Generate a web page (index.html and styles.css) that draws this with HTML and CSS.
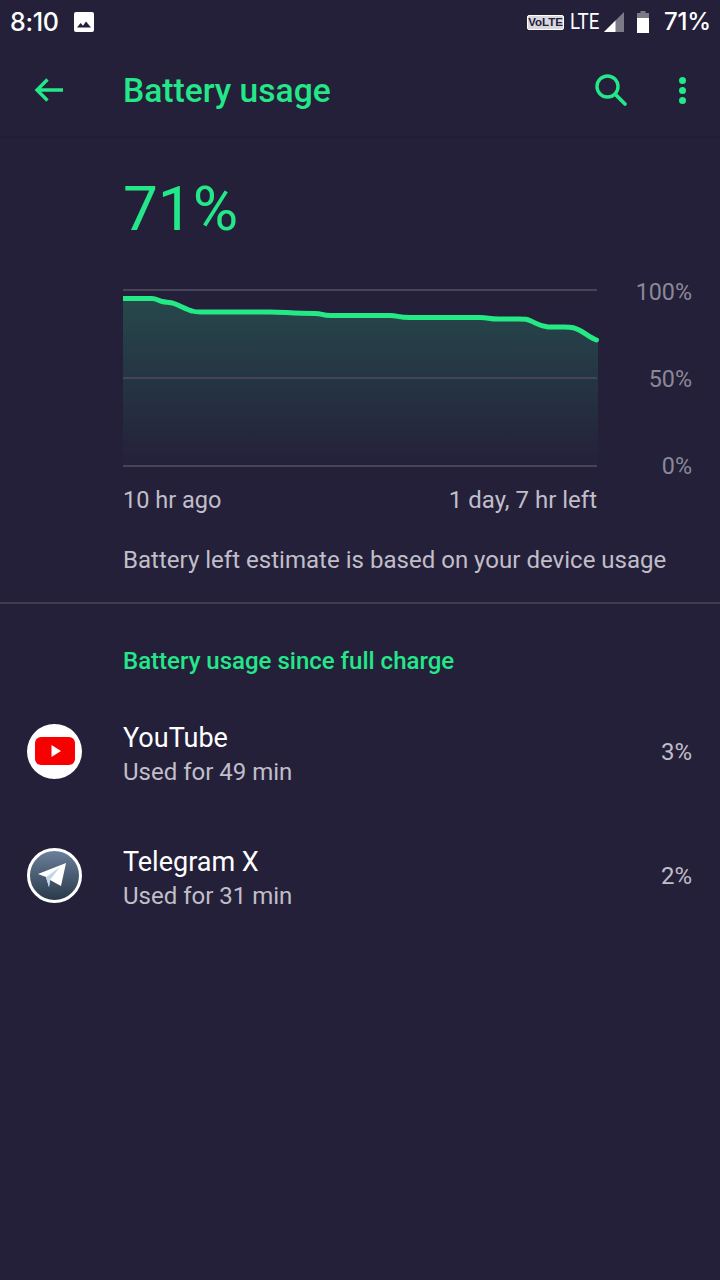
FILE: index.html
```html
<!DOCTYPE html>
<html lang="en">
<head>
<meta charset="utf-8">
<title>Battery usage</title>
<link rel="stylesheet" href="styles.css">
</head>
<body>
<div class="screen">
  <header class="status">
    <div class="status-left">
      <span class="time">8:10</span>
      <svg class="ic-photo" viewBox="0 0 20 20"><rect width="20" height="20" rx="2" fill="#fff"/><path d="M3 15.500l3.600-4.600 2.400 2.900 3-4.300 5 6z" fill="#24203a"/></svg>
    </div>
    <div class="status-right">
      <span class="volte">VoLTE</span>
      <span class="lte">LTE</span>
      <svg class="ic-signal" viewBox="0 0 20 20"><path d="M20 0v20H0z" fill="#7d7a88"/><path d="M11.500 8.500V20H0z" fill="#fff"/></svg>
      <svg class="ic-batt" viewBox="0 0 12 22"><path d="M3.500 0h5v2H12v5H0V2h3.500z" fill="#7d7a88"/><rect y="7" width="12" height="15" fill="#fff"/></svg>
      <span class="pct">71%</span>
    </div>
  </header>

  <nav class="toolbar">
    <div class="nav-icon">
      <svg width="32" height="32" viewBox="0 0 32 32"><path d="M31 16H5M15.500 5.500L5 16 15.500 26.500" fill="none" stroke="#23e788" stroke-width="3.400"/></svg>
    </div>
    <h1 class="title">Battery usage</h1>
    <svg class="ic-search" viewBox="0 0 34 34"><circle cx="13.500" cy="13.500" r="10.500" fill="none" stroke="#23e788" stroke-width="3.400"/><path d="M21.500 21.500L31 31" stroke="#23e788" stroke-width="3.800" stroke-linecap="round"/></svg>
    <div class="dots"><i></i><i></i><i></i></div>
  </nav>

  <section class="summary">
    <div class="big">71%</div>
    <div class="chart-row">
      <svg class="chart" viewBox="0 0 476 178">
        <defs>
          <linearGradient id="fade" x1="0" y1="0" x2="0" y2="1">
            <stop offset="0" stop-color="#26484b"/>
            <stop offset="1" stop-color="#24203a"/>
          </linearGradient>
        </defs>
        <path d="M0 9.500H29C33 9.500 35 11.500 39 12.500C43 13.500 47 13 51 14.500C58 17 64 21 69 22C72 23 74 23 78 23H147C160 23 170 24.500 192 24.500C200 24.500 198 26.500 208 26.500H267C275 26.500 275 28.500 287 28.500H357C366 28.500 365 30 376 30H396C403 30 403 30 408 32C414 34.500 416 37 425 38H441C450 38 452 39 456 41C462 44 468 49 475 51V177H0z" fill="url(#fade)"/>
        <g stroke="#47445a" stroke-width="2">
          <path d="M0 1H474M0 89H474M0 177H474"/>
        </g>
        <path d="M0 9.500H29C33 9.500 35 11.500 39 12.500C43 13.500 47 13 51 14.500C58 17 64 21 69 22C72 23 74 23 78 23H147C160 23 170 24.500 192 24.500C200 24.500 198 26.500 208 26.500H267C275 26.500 275 28.500 287 28.500H357C366 28.500 365 30 376 30H396C403 30 403 30 408 32C414 34.500 416 37 425 38H441C450 38 452 39 456 41C462 44 468 49 473.500 51" fill="none" stroke="#24ea86" stroke-width="5" stroke-linecap="round"/>
      </svg>
      <div class="scale"><span>100%</span><span>50%</span><span>0%</span></div>
    </div>
    <div class="axis"><span class="ago">10 hr ago</span><span>1 day, 7 hr left</span></div>
    <p class="note">Battery left estimate is based on your device usage</p>
  </section>

  <section class="usage">
    <h2 class="section-title">Battery usage since full charge</h2>
    <div class="app">
      <div class="app-icon icon-yt">
        <svg width="40" height="28" viewBox="0 0 40 28"><rect width="40" height="28" rx="6" fill="#f80000"/><path d="M16.500 8L26 14 16.500 20z" fill="#fff"/></svg>
      </div>
      <div class="app-text"><div class="app-name">YouTube</div><div class="app-sub">Used for 49 min</div></div>
      <div class="app-pct">3%</div>
    </div>
    <div class="app">
      <div class="app-icon icon-tg">
        <svg width="28" height="24" viewBox="0 0 28 24"><path d="M0 11L28 0 23 23 12 17 11 24 8 14z" fill="#fff"/><path d="M8 14L22 4 12 17 11 24z" fill="#c3d6e6"/></svg>
      </div>
      <div class="app-text"><div class="app-name">Telegram X</div><div class="app-sub">Used for 31 min</div></div>
      <div class="app-pct">2%</div>
    </div>
  </section>
</div>
</body>
</html>
```
FILE: styles.css
```css
* { box-sizing: border-box; }
html, body { margin: 0; padding: 0; }
body { background: #24203a; font-family: Roboto, "Noto Sans", sans-serif; color: #fff; }
.screen { width: 720px; height: 1280px; overflow: hidden; background: #24203a; }

.status { height: 48px; display: flex; justify-content: space-between; align-items: center; padding: 0 10px 5px 10px; }
.status-left, .status-right { display: flex; align-items: center; }
.time { font-size: 25px; font-weight: 500; font-family: Inter, Roboto, sans-serif; width: 47px; letter-spacing: -0.3px; white-space: nowrap; }
.ic-photo { width: 20px; height: 20px; margin-left: 17px; }
.volte { font-family: "Liberation Sans", sans-serif; font-weight: 700; font-size: 11.500px; line-height: 12px; height: 15px; width: 37px; text-align: center; background: #d8d7de; border: 1.500px solid #fff; color: #24203a; border-radius: 2px; margin-top: 1px; letter-spacing: 0; white-space: nowrap; }
.lte { font-size: 22px; color: #fff; margin-left: 6px; font-weight: 400; transform: scaleX(0.85); transform-origin: left; width: 28px; }
.ic-signal { width: 20px; height: 20px; margin-left: 6px; }
.ic-batt { width: 12px; height: 22px; margin-left: 13px; }
.pct { font-family: Inter, Roboto, sans-serif; font-size: 24px; font-weight: 500; margin-left: 15px; letter-spacing: -0.2px; margin-right: -1px; }

.toolbar { height: 89px; display: flex; align-items: center; padding: 0 0 4px 32px; border-bottom: 1px solid #211d33; box-shadow: 0 1px 2px rgba(0,0,0,0.12); color: #23e788; }
.nav-icon { width: 91px; height: 32px; }
.title { margin: 0; font-size: 33.600px; font-weight: 500; color: #23e788; flex: 1; }
.ic-search { width: 34px; height: 34px; margin-right: 51px; margin-top: -1px; }
.dots { display: flex; flex-direction: column; gap: 3px; margin-right: 34px; }
.dots i { display: block; width: 7px; height: 7px; border-radius: 50%; background: #23e788; }

.summary { height: 467px; padding: 34px 0 0 123px; border-bottom: 2px solid #3f3c50; }
.big { font-size: 62px; line-height: 76px; color: #23e788; font-weight: 400; }
.chart-row { display: flex; margin-top: 42px; height: 178px; }
.chart { width: 476px; height: 178px; display: block; }
.scale { width: 93px; display: flex; flex-direction: column; justify-content: space-between; align-items: flex-end; font-size: 23.300px; line-height: 28px; color: #8b8897; margin: -11px 0 -13px 0; }
.axis { width: 474px; display: flex; justify-content: space-between; margin-top: 17px; font-size: 24px; line-height: 32px; color: #c0bec8; }
.ago { font-size: 23.500px; }
.note { margin: 28px 0 0; font-size: 24.050px; line-height: 32px; color: #c0bec8; white-space: nowrap; }

.usage { padding: 0; }
.section-title { margin: 0; padding: 41px 0 0 123px; font-size: 24px; line-height: 32px; font-weight: 500; color: #23e788; }
.app { display: flex; align-items: center; height: 124px; padding: 0 28px 0 27px; }
.app:first-of-type { margin-top: 12px; }
.app-icon { width: 55px; height: 55px; border-radius: 50%; display: flex; align-items: center; justify-content: center; flex: none; }
.icon-yt { background: #fff; }
.icon-tg { background: linear-gradient(#6a7f99, #2b3a4c); border: 3px solid #fff; padding-right: 6px; }
.app-text { flex: 1; margin-left: 41px; padding-top: 7px; }
.app-name { font-size: 27px; line-height: 35px; color: #fff; }
.app-sub { font-size: 24px; line-height: 33px; color: #c0bec8; }
.app-pct { font-size: 24px; color: #c0bec8; padding-top: 2px; }
```
